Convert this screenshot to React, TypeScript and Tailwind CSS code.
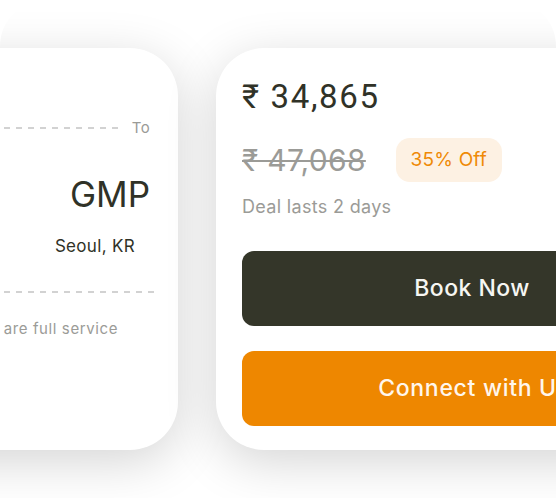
import React from 'react';

const Dashes: React.FC<{ className?: string }> = ({ className = '' }) => (
  <div
    className={`h-[2px] bg-[repeating-linear-gradient(to_right,transparent_0_6px,#d2d2d2_6px_12px)] ${className}`}
  />
);

export default function App() {
  return (
    <div className="h-[498px] w-[556px] overflow-hidden bg-white">
      <div className="h-[540px] overflow-hidden rounded-t-[46px] pt-[48px] font-['Inter',sans-serif] tracking-[0.02em]">
        <div className="flex gap-[38px]">
          {/* Flight summary, cut off on the left */}
          <div className="ml-[-182px] h-[402px] w-[360px] shrink-0 rounded-[48px] bg-white pr-[24px] pt-[72px] shadow-[0_12px_50px_rgba(0,0,0,0.17)]">
            <div className="flex items-center gap-[14px] pr-[4px]">
              <Dashes className="flex-1" />
              <span className="text-[15px] leading-none text-[#9b9b97]">To</span>
            </div>
            <div className="mt-[42px] pr-[4px] text-right text-[35px] leading-none tracking-normal text-[#303227]">
              GMP
            </div>
            <div className="mt-[26px] pr-[19px] text-right text-[17px] leading-none text-[#303227]">
              Seoul, KR
            </div>
            <Dashes className="mt-[36px]" />
            <div className="mt-[28px] whitespace-nowrap pr-[36px] text-right text-[15px] leading-none tracking-[0.04em] text-[#9b9b97]">
              Our flights are full service
            </div>
          </div>

          {/* Pricing card */}
          <div className="h-[402px] w-[728px] shrink-0 rounded-[48px] bg-white px-[26px] pt-[32px] shadow-[0_12px_50px_rgba(0,0,0,0.17)]">
            <div className="font-['Roboto',sans-serif] text-[33px] leading-none tracking-[0.05em] text-[#303227]">₹ 34,865</div>
            <div className="mt-[25px] flex items-center">
              <span className="text-[30px] leading-none text-[#9b9b97] line-through decoration-[2px]">₹ 47,068</span>
              <span className="ml-[30px] flex h-[44px] w-[106px] items-center justify-center rounded-[14px] bg-[#fdf1e3] text-[19px] tracking-[0.01em] text-[#ef8a06]">
                35% Off
              </span>
            </div>
            <div className="mt-[16px] text-[18px] leading-none text-[#9b9b97]">Deal lasts 2 days</div>
            <div className="mt-[35px] flex w-[460px] flex-col gap-[25px]">
              <button className="flex h-[75px] items-center justify-center rounded-[12px] bg-[#343629] text-[23px] font-medium tracking-[0.02em] text-[#f6f6f2]">
                Book Now
              </button>
              <button className="flex h-[75px] items-center justify-center rounded-[12px] bg-[#ee8700] pl-[4px] text-[23px] font-medium tracking-[0.03em] text-[#fff6ec]">
                Connect with Us
              </button>
            </div>
          </div>
        </div>
      </div>
    </div>
  );
}
